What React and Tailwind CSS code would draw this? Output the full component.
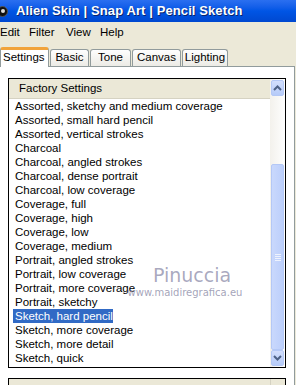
import React from "react";

const presets = [
  "Assorted, sketchy and medium coverage",
  "Assorted, small hard pencil",
  "Assorted, vertical strokes",
  "Charcoal",
  "Charcoal, angled strokes",
  "Charcoal, dense portrait",
  "Charcoal, low coverage",
  "Coverage, full",
  "Coverage, high",
  "Coverage, low",
  "Coverage, medium",
  "Portrait, angled strokes",
  "Portrait, low coverage",
  "Portrait, more coverage",
  "Portrait, sketchy",
  "Sketch, hard pencil",
  "Sketch, more coverage",
  "Sketch, more detail",
  "Sketch, quick",
];

const tabs = [
  { label: "Settings", w: "w-[49px]", active: true },
  { label: "Basic", w: "w-[39px]" },
  { label: "Tone", w: "w-[41px]" },
  { label: "Canvas", w: "w-[49px]" },
  { label: "Lighting", w: "w-[46px]" },
];

function Chevron({ up }) {
  return (
    <svg width="9" height="6" viewBox="0 0 9 6">
      <path
        d={up ? "M1 5 L4.5 1.5 L8 5" : "M1 1 L4.5 4.5 L8 1"}
        fill="none"
        stroke="#4d6185"
        strokeWidth="2"
      />
    </svg>
  );
}

function ScrollButton({ up }) {
  return (
    <div className="h-[16px] mx-[1px] rounded-[2px] border border-[#b4c8f6] bg-gradient-to-b from-[#d2defc] to-[#b6cbf9] flex items-center justify-center">
      <Chevron up={up} />
    </div>
  );
}

export default function App() {
  return (
    <div className="relative w-[296px] h-[385px] overflow-hidden bg-[#ece9d8] font-['Liberation_Sans',Arial,sans-serif] text-[11.5px] text-black">
      {/* Title bar */}
      <div className="h-[22px] flex items-center bg-gradient-to-b from-[#2a6ff0] via-[#0055e5] to-[#0048d0]">
        <div className="w-[11px] h-[11px] -ml-[3px] mr-[8px] rounded-full bg-[#111] border border-[#555] flex items-center justify-center">
          <div className="w-[4px] h-[4px] rounded-full bg-[#ddd]" />
        </div>
        <span className="text-white font-bold text-[13px] tracking-[0.1px] [text-shadow:1px_1px_0_#0a246a]">
          Alien Skin | Snap Art | Pencil Sketch
        </span>
      </div>

      {/* Menu bar */}
      <div className="h-[22px] flex items-center">
        <span className="w-[29px]">Edit</span>
        <span className="w-[37px]">Filter</span>
        <span className="w-[34px]">View</span>
        <span>Help</span>
      </div>

      {/* Tabs */}
      <div className="h-[22px] flex items-end">
        {tabs.map((t) =>
          t.active ? (
            <div
              key={t.label}
              className={`${t.w} h-[20px] relative z-10 -mb-[1px] bg-white border-x border-[#919b9c] rounded-t-[3px] border-t-[3px] border-t-[#f1a33b] pl-[2px] leading-[14px]`}
            >
              {t.label}
            </div>
          ) : (
            <div
              key={t.label}
              className={`${t.w} h-[17px] ml-[1px] bg-gradient-to-b from-[#fefefe] to-[#ecebe5] border border-b-0 border-[#919b9c] rounded-t-[3px] flex items-center justify-center`}
            >
              {t.label}
            </div>
          )
        )}
      </div>

      {/* Tab panel */}
      <div className="w-[295px] h-[319px] bg-white border-t border-r border-[#919b9c] pt-[11px] pl-[8px]">
        <div className="w-[278px] h-[290px] border border-black flex">
          <div className="flex-1 flex flex-col">
            <div className="h-[20px] bg-[#ebe8d7] border-b border-[#d5d2c2] pl-[10px] flex items-center">
              Factory Settings
            </div>
            <div className="flex flex-col pl-[4px]">
              {presets.map((p) => (
                <div key={p} className="h-[14px] flex items-center">
                  <span
                    className={
                      p === "Sketch, hard pencil"
                        ? "bg-[#316ac5] text-white px-[2px] h-[14px] leading-[14px] w-[100px] whitespace-nowrap"
                        : "px-[2px] leading-[14px] whitespace-nowrap"
                    }
                  >
                    {p}
                  </span>
                </div>
              ))}
            </div>
          </div>

          {/* Scrollbar */}
          <div className="w-[15px] bg-gradient-to-r from-[#f3f1ec] to-[#fefefe] flex flex-col pt-[1px] pb-[1px]">
            <ScrollButton up />
            <div className="h-[68px]" />
            <div className="flex-1 mx-[1px] rounded-[2px] border border-[#b4c8f6] bg-gradient-to-r from-[#c9d8fc] to-[#bccffb] flex items-center justify-center">
              <div className="flex flex-col gap-[1px]">
                <div className="w-[6px] h-[1px] bg-[#eef3fe]" />
                <div className="w-[6px] h-[1px] bg-[#eef3fe]" />
                <div className="w-[6px] h-[1px] bg-[#eef3fe]" />
                <div className="w-[6px] h-[1px] bg-[#eef3fe]" />
              </div>
            </div>
            <ScrollButton />
          </div>
        </div>

        {/* User settings box */}
        <div className="mt-[10px] w-[278px] h-[30px] border border-black flex">
          <div className="flex-1 bg-[#ebe8d7] pl-[10px] pt-[3px]">User Settings</div>
          <div className="w-[15px] border-l border-[#d5d2c2] bg-[#ebe8d7]" />
        </div>
      </div>

      {/* Watermark */}
      <div className="absolute left-[124px] top-[264px] w-[122px] flex flex-col items-center pointer-events-none">
        <span className="ml-[14px] text-[19px] leading-[23px] text-[#9a9ab4]/85 font-['DejaVu_Sans',sans-serif]">
          Pinuccia
        </span>
        <span className="text-[10px] leading-[11px] text-[#8d8da8]/80 font-['DejaVu_Sans',sans-serif]">
          www.maidiregrafica.eu
        </span>
      </div>
    </div>
  );
}
